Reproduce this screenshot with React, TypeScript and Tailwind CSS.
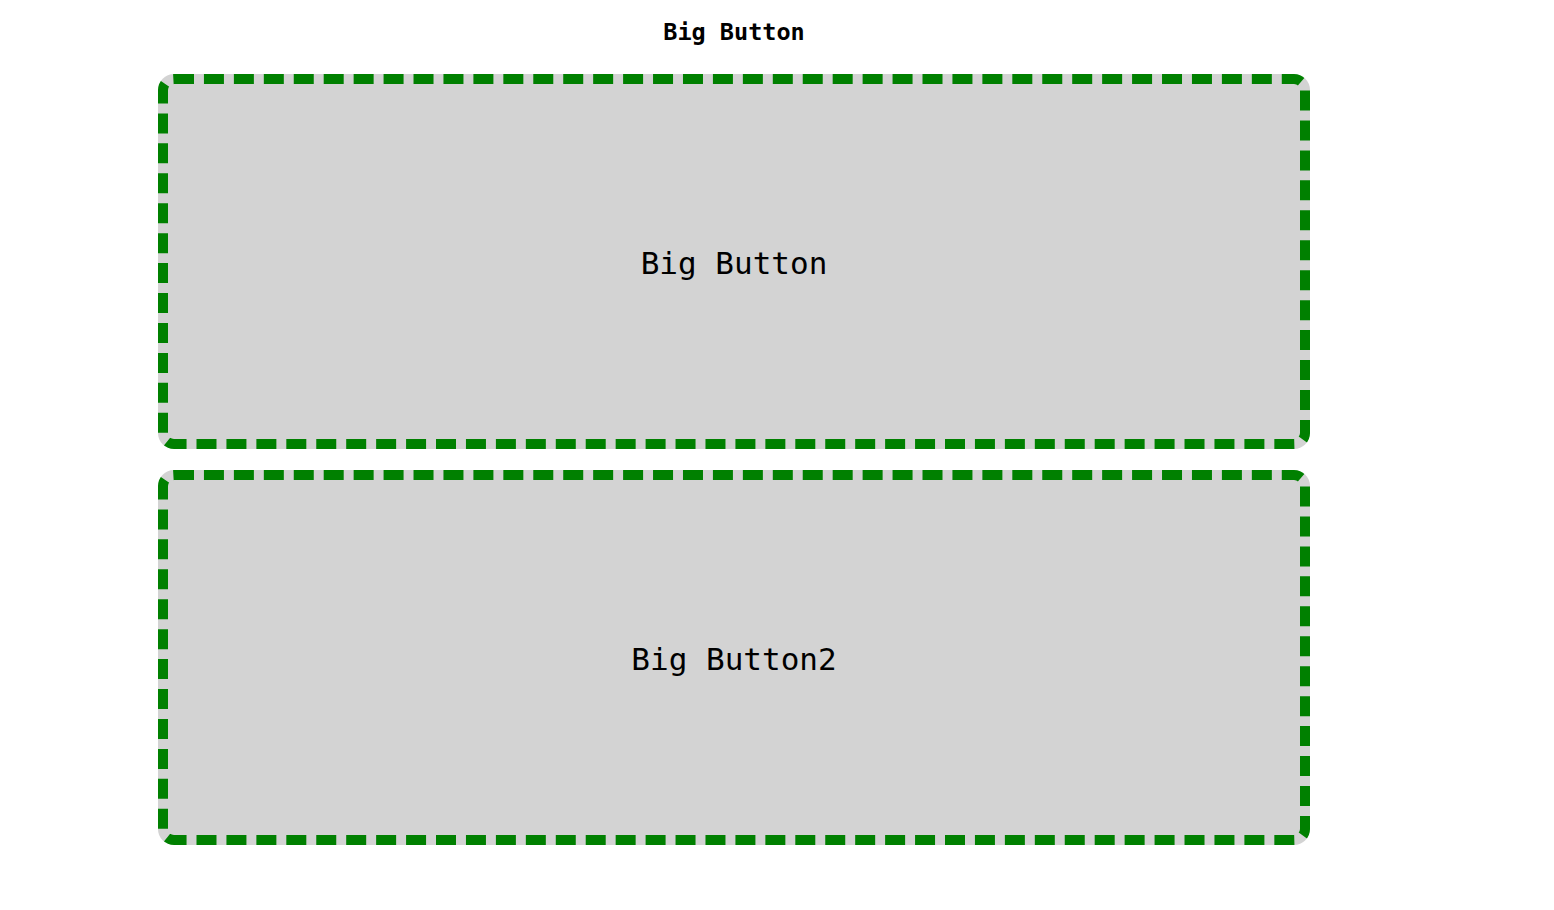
export default function App() {
  const mono = "font-['Consolas','DejaVu_Sans_Mono',monospace]";
  return (
    <div className={`min-h-screen bg-white text-black ${mono}`}>
      <div className="ml-[158px] flex w-[1152px] flex-col">
        {/* heading */}
        <h1 className="h-[64px] text-center text-[23.5px] font-bold leading-[64px]">Big Button</h1>
        <div className="mt-[10px] flex flex-col gap-[21px]">
          {["Big Button", "Big Button2"].map((label) => (
            <button
              key={label}
              className="flex h-[375px] w-full items-center justify-center rounded-[16px] border-[10px] border-dashed border-[#008000] bg-[#d3d3d3] pt-[4px] text-[31px]"
            >
              {label}
            </button>
          ))}
        </div>
      </div>
    </div>
  );
}
